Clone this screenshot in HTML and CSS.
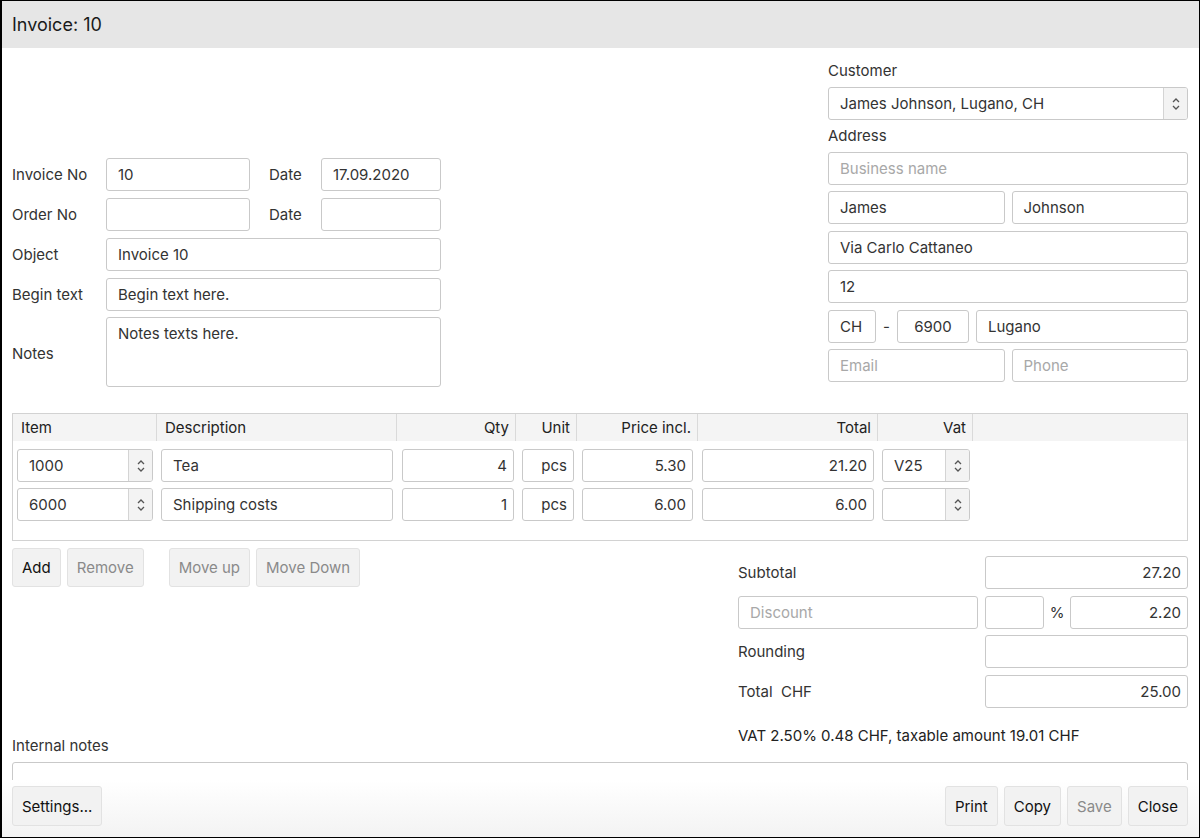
FILE: index.html
```html
<!DOCTYPE html>
<html>
<head>
<meta charset="utf-8">
<title>Invoice: 10</title>
<link rel="stylesheet" href="styles.css">
</head>
<body>
<div class="window">
  <div class="header">Invoice: 10</div>
  <div class="content">
    <div class="top">
      <div class="form-grid">
        <label class="lbl">Invoice No</label>
        <div class="field">10</div>
        <label class="lbl date-lbl">Date</label>
        <div class="field">17.09.2020</div>

        <label class="lbl">Order No</label>
        <div class="field"></div>
        <label class="lbl date-lbl">Date</label>
        <div class="field"></div>

        <label class="lbl">Object</label>
        <div class="field span3">Invoice 10</div>

        <label class="lbl">Begin text</label>
        <div class="field span3">Begin text here.</div>

        <label class="lbl">Notes</label>
        <div class="field span3 area">Notes texts here.</div>
      </div>

      <div class="customer">
        <div class="cap first">Customer</div>
        <div class="field select"><span class="sel-text">James Johnson, Lugano, CH</span><span class="stepper"><svg width="10" height="16" viewBox="0 0 10 16"><path d="M2 6 L5 3 L8 6 M2 10 L5 13 L8 10" fill="none" stroke="#555" stroke-width="1.3"/></svg></span></div>
        <div class="cap">Address</div>
        <div class="addr">
          <div class="field ph">Business name</div>
          <div class="pair">
            <div class="field">James</div>
            <div class="field">Johnson</div>
          </div>
          <div class="field">Via Carlo Cattaneo</div>
          <div class="field">12</div>
          <div class="city">
            <div class="field cc">CH</div>
            <span class="dash">-</span>
            <div class="field zip">6900</div>
            <div class="field grow">Lugano</div>
          </div>
          <div class="pair">
            <div class="field ph">Email</div>
            <div class="field ph">Phone</div>
          </div>
        </div>
      </div>
    </div>

    <div class="table">
      <div class="trow thead">
        <div class="th">Item</div>
        <div class="th">Description</div>
        <div class="th r">Qty</div>
        <div class="th r">Unit</div>
        <div class="th r">Price incl.</div>
        <div class="th r">Total</div>
        <div class="th r">Vat</div>
        <div class="th last"></div>
      </div>
      <div class="tbody">
        <div class="trow">
          <div class="td"><div class="field select"><span class="sel-text">1000</span><span class="stepper"><svg width="10" height="16" viewBox="0 0 10 16"><path d="M2 6 L5 3 L8 6 M2 10 L5 13 L8 10" fill="none" stroke="#555" stroke-width="1.3"/></svg></span></div></div>
          <div class="td"><div class="field">Tea</div></div>
          <div class="td"><div class="field r">4</div></div>
          <div class="td"><div class="field r">pcs</div></div>
          <div class="td"><div class="field r">5.30</div></div>
          <div class="td"><div class="field r">21.20</div></div>
          <div class="td"><div class="field select"><span class="sel-text">V25</span><span class="stepper"><svg width="10" height="16" viewBox="0 0 10 16"><path d="M2 6 L5 3 L8 6 M2 10 L5 13 L8 10" fill="none" stroke="#555" stroke-width="1.3"/></svg></span></div></div>
          <div class="td"></div>
        </div>
        <div class="trow">
          <div class="td"><div class="field select"><span class="sel-text">6000</span><span class="stepper"><svg width="10" height="16" viewBox="0 0 10 16"><path d="M2 6 L5 3 L8 6 M2 10 L5 13 L8 10" fill="none" stroke="#555" stroke-width="1.3"/></svg></span></div></div>
          <div class="td"><div class="field">Shipping costs</div></div>
          <div class="td"><div class="field r">1</div></div>
          <div class="td"><div class="field r">pcs</div></div>
          <div class="td"><div class="field r">6.00</div></div>
          <div class="td"><div class="field r">6.00</div></div>
          <div class="td"><div class="field select"><span class="sel-text"></span><span class="stepper"><svg width="10" height="16" viewBox="0 0 10 16"><path d="M2 6 L5 3 L8 6 M2 10 L5 13 L8 10" fill="none" stroke="#555" stroke-width="1.3"/></svg></span></div></div>
          <div class="td"></div>
        </div>
      </div>
    </div>

    <div class="middle">
      <div class="left-col">
        <div class="btns">
          <button class="btn">Add</button>
          <button class="btn dis">Remove</button>
          <button class="btn dis sep">Move up</button>
          <button class="btn dis">Move Down</button>
        </div>
        <div class="cap">Internal notes</div>
      </div>
      <div class="totals">
        <div class="trow2">
          <span class="tl">Subtotal</span>
          <div class="field r tv">27.20</div>
        </div>
        <div class="trow2">
          <div class="field ph disc">Discount</div>
          <div class="field pct"></div>
          <span class="pct-sign">%</span>
          <div class="field r dval">2.20</div>
        </div>
        <div class="trow2">
          <span class="tl">Rounding</span>
          <div class="field r tv"></div>
        </div>
        <div class="trow2">
          <span class="tl">Total&nbsp; CHF</span>
          <div class="field r tv">25.00</div>
        </div>
        <div class="vat">VAT 2.50% 0.48 CHF, taxable amount 19.01 CHF</div>
      </div>
    </div>
    <div class="field notes-area"></div>
  </div>
  <div class="footer">
    <button class="btn big">Settings...</button>
    <div class="right-btns">
      <button class="btn big">Print</button>
      <button class="btn big">Copy</button>
      <button class="btn big dis">Save</button>
      <button class="btn big">Close</button>
    </div>
  </div>
</div>
</body>
</html>
```

FILE: styles.css
```css
* { box-sizing: border-box; }
html, body { margin: 0; padding: 0; }
body {
  font-family: Inter, "Noto Sans", "Liberation Sans", sans-serif;
  font-size: 15px;
  color: #222;
  background: #fff;
}
.window {
  width: 1200px;
  height: 838px;
  border: 1px solid #000;
  border-left-width: 2px;
  display: flex;
  flex-direction: column;
  overflow: hidden;
}
.header {
  height: 47px;
  flex: 0 0 47px;
  background: #e6e6e6;
  display: flex;
  align-items: center;
  padding-left: 10px;
  font-size: 18px;
  color: #1a1a1a;
}
.content {
  flex: 1 1 auto;
  min-height: 0;
  overflow: hidden;
  padding: 0 11px 0 10px;
}
.top {
  display: flex;
  justify-content: space-between;
  align-items: flex-start;
}
.form-grid {
  margin-top: 110px;
  display: grid;
  grid-template-columns: 94px 144px 71px 120px;
  grid-template-rows: 33px 33px 33px 33px 70px;
  row-gap: 7px;
}
.lbl {
  display: flex;
  align-items: center;
  color: #333;
}
.date-lbl { padding-left: 19px; }
.field {
  height: 33px;
  border: 1px solid #c9c9c9;
  border-radius: 3px;
  background: #fff;
  padding: 0 11px;
  display: flex;
  align-items: center;
  color: #333;
  white-space: nowrap;
  overflow: hidden;
}
.field.r { justify-content: flex-end; padding: 0 6px; }
.field.ph { color: #a8a8a8; }
.span3 { grid-column: 2 / 5; }
.area { height: 70px; align-items: flex-start; padding-top: 6px; margin-top: -1px; }

.customer {
  width: 360px;
  margin-top: 13px;
}
.cap {
  height: 20px;
  line-height: 20px;
  color: #333;
}
.customer .select { margin-top: 6px; }
.customer .cap:not(.first) { margin-top: 6px; }
.select { padding-right: 0; }
.sel-text { flex: 1; }
.stepper {
  width: 24px;
  height: 100%;
  border-left: 1px solid #d4d4d4;
  background: #f3f3f3;
  display: flex;
  align-items: center;
  justify-content: center;
}
.addr {
  margin-top: 6px;
  display: flex;
  flex-direction: column;
  gap: 6.4px;
}
.pair {
  display: grid;
  grid-template-columns: 1fr 1fr;
  column-gap: 7px;
}
.city { display: flex; align-items: center; }
.cc { width: 48px; }
.dash { width: 21px; text-align: center; color: #333; }
.zip { width: 72px; margin-right: 7px; justify-content: center; }
.grow { flex: 1; }

.table {
  margin-top: 25px;
  border: 1px solid #d2d2d2;
  height: 128px;
}
.trow {
  display: grid;
  grid-template-columns: 144px 240px 119px 61px 121px 180px 95px 1fr;
}
.thead {
  height: 27px;
  background: #f4f4f4;
}
.th {
  display: flex;
  align-items: center;
  padding: 0 6px 0 8px;
  border-right: 1px solid #dadada;
  color: #222;
}
.th.r { justify-content: flex-end; }
.th.last { border-right: none; }
.tbody {
  padding-top: 8px;
  display: flex;
  flex-direction: column;
  gap: 6px;
}
.td { padding: 0 4px; }
.td:nth-child(3) { padding: 0 2px 0 5px; }
.td:nth-child(4) { padding: 0 3px 0 6px; }
.td:nth-child(5) { padding: 0 5px 0 5px; }
.td:nth-child(7) { padding: 0 3px 0 4px; }

.middle {
  display: flex;
  justify-content: space-between;
}
.left-col {
  display: flex;
  flex-direction: column;
  justify-content: space-between;
  padding-top: 7px;
}
.btns { display: flex; gap: 6px; }
.btn {
  font-family: inherit;
  font-size: 15px;
  height: 39px;
  padding: 0 9px;
  background: #f2f2f2;
  border: 1px solid #e2e2e2;
  border-radius: 3px;
  color: #111;
}
.btn.dis { color: #8a8a8a; }
.btn.sep { margin-left: 19px; }
.totals {
  width: 450px;
  padding-top: 15px;
  display: flex;
  flex-direction: column;
  gap: 6.7px;
}
.trow2 { display: flex; align-items: center; }
.tl { width: 247px; color: #333; }
.tv { width: 203px; }
.disc { width: 240px; }
.pct { width: 59px; margin-left: 7px; }
.pct-sign { width: 26px; text-align: center; color: #333; }
.dval { width: 118px; }
.vat {
  margin-top: 11px;
  margin-bottom: 10px;
  height: 20px;
  line-height: 20px;
  color: #222;
}
.notes-area {
  margin-top: 6px;
  height: 50px;
}
.footer {
  flex: 0 0 57px;
  height: 57px;
  padding: 6px 11px 0 10px;
  display: flex;
  justify-content: space-between;
  align-items: flex-start;
  background: linear-gradient(#ffffff, #f3f3f3);
}
.right-btns { display: flex; gap: 6px; }
.btn.big { height: 40px; padding: 0 9px; }
```
